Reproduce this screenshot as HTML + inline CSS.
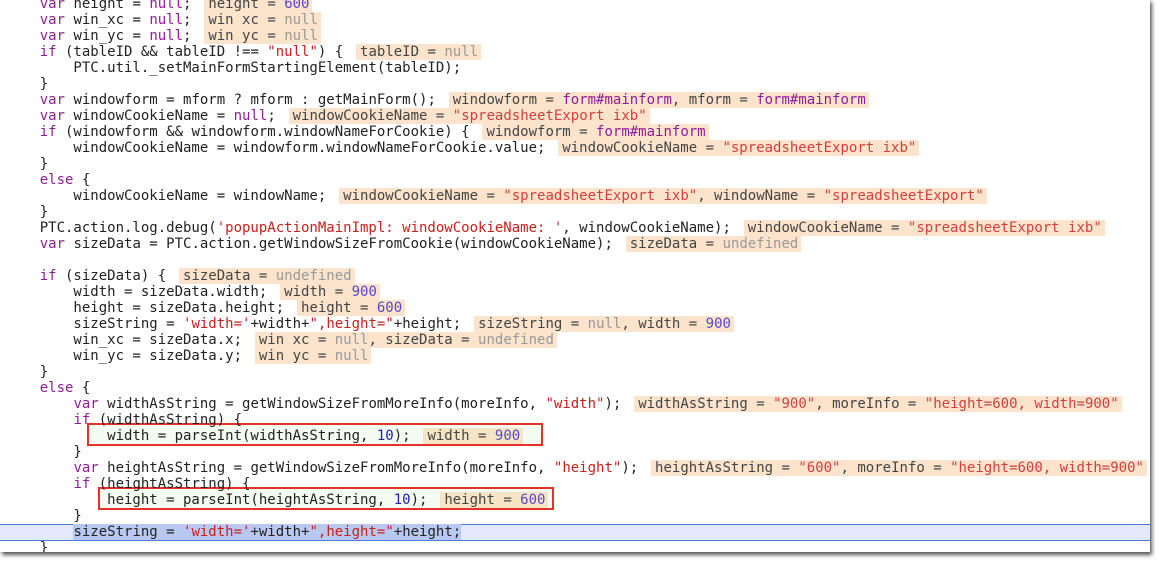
<!DOCTYPE html>
<html><head><meta charset="utf-8"><style>
html,body{margin:0;padding:0;background:#fff;width:1163px;height:565px;overflow:hidden}
#pg{position:absolute;left:0;top:-1px;width:1150px;height:553px;background:#fff;overflow:hidden;
box-shadow:2px 3px 4px rgba(0,0,0,.65),0 0 2px rgba(0,0,0,.15)}
.ln{position:absolute;left:6px;height:16px;line-height:16px;white-space:pre;font-family:"DejaVu Sans Mono","Liberation Mono",monospace;font-size:14px;color:#222}
.k{color:#8e1e95}.s{color:#c8201c}.n{color:#2020b0}
.a{background:#fbe3cc;display:inline-block;height:16px;margin-left:-4px;padding:0 3px 0 4px;color:#444}
.a .g{color:#999}.a .s{color:#d04040}.a .n{color:#5848c8}.a .k{color:#8e1e95}
.box{position:absolute;border:2px solid #e6302a;background:#f4fbf1;box-sizing:border-box}
.sel{position:absolute;left:0;width:1150px;top:523px;height:17px;background:#e2e9fa;border-top:1px solid #4a7ae0;border-bottom:1px solid #4a7ae0;box-sizing:border-box}
.hs{background:#b8c8f0}
</style></head><body><div id="pg">
<div class="sel" style="top:525px"></div>
<div class="box" style="left:87px;top:424px;width:456px;height:23px"></div>
<div class="box" style="left:98px;top:488px;width:456px;height:23px"></div>
<div class="ln" style="top:-3px">    <span class="k">var</span> height = <span class="k">null</span>;  <span class="a">height = <span class="n">600</span></span></div>
<div class="ln" style="top:13px">    <span class="k">var</span> win_xc = <span class="k">null</span>;  <span class="a">win xc = <span class="g">null</span></span></div>
<div class="ln" style="top:29px">    <span class="k">var</span> win_yc = <span class="k">null</span>;  <span class="a">win yc = <span class="g">null</span></span></div>
<div class="ln" style="top:45px">    <span class="k">if</span> (tableID &amp;&amp; tableID !== <span class="s">"null"</span>) {  <span class="a">tableID = <span class="g">null</span></span></div>
<div class="ln" style="top:61px">        PTC.util._setMainFormStartingElement(tableID);</div>
<div class="ln" style="top:77px">    }</div>
<div class="ln" style="top:93px">    <span class="k">var</span> windowform = mform ? mform : getMainForm();  <span class="a">windowform = <span class="k">form#mainform</span>, mform = <span class="k">form#mainform</span></span></div>
<div class="ln" style="top:109px">    <span class="k">var</span> windowCookieName = <span class="k">null</span>;  <span class="a">windowCookieName = <span class="s">"spreadsheetExport ixb"</span></span></div>
<div class="ln" style="top:125px">    <span class="k">if</span> (windowform &amp;&amp; windowform.windowNameForCookie) {  <span class="a">windowform = <span class="k">form#mainform</span></span></div>
<div class="ln" style="top:141px">        windowCookieName = windowform.windowNameForCookie.value;  <span class="a">windowCookieName = <span class="s">"spreadsheetExport ixb"</span></span></div>
<div class="ln" style="top:157px">    }</div>
<div class="ln" style="top:173px">    <span class="k">else</span> {</div>
<div class="ln" style="top:189px">        windowCookieName = windowName;  <span class="a">windowCookieName = <span class="s">"spreadsheetExport ixb"</span>, windowName = <span class="s">"spreadsheetExport"</span></span></div>
<div class="ln" style="top:205px">    }</div>
<div class="ln" style="top:221px">    PTC.action.log.debug(<span class="s">'popupActionMainImpl: windowCookieName: '</span>, windowCookieName);  <span class="a">windowCookieName = <span class="s">"spreadsheetExport ixb"</span></span></div>
<div class="ln" style="top:237px">    <span class="k">var</span> sizeData = PTC.action.getWindowSizeFromCookie(windowCookieName);  <span class="a">sizeData = <span class="g">undefined</span></span></div>
<div class="ln" style="top:269px">    <span class="k">if</span> (sizeData) {  <span class="a">sizeData = <span class="g">undefined</span></span></div>
<div class="ln" style="top:285px">        width = sizeData.width;  <span class="a">width = <span class="n">900</span></span></div>
<div class="ln" style="top:301px">        height = sizeData.height;  <span class="a">height = <span class="n">600</span></span></div>
<div class="ln" style="top:317px">        sizeString = <span class="s">'width='</span>+width+<span class="s">",height="</span>+height;  <span class="a">sizeString = <span class="g">null</span>, width = <span class="n">900</span></span></div>
<div class="ln" style="top:333px">        win_xc = sizeData.x;  <span class="a">win xc = <span class="g">null</span>, sizeData = <span class="g">undefined</span></span></div>
<div class="ln" style="top:349px">        win_yc = sizeData.y;  <span class="a">win yc = <span class="g">null</span></span></div>
<div class="ln" style="top:365px">    }</div>
<div class="ln" style="top:381px">    <span class="k">else</span> {</div>
<div class="ln" style="top:397px">        <span class="k">var</span> widthAsString = getWindowSizeFromMoreInfo(moreInfo, <span class="s">"width"</span>);  <span class="a">widthAsString = <span class="s">"900"</span>, moreInfo = <span class="s">"height=600, width=900"</span></span></div>
<div class="ln" style="top:413px">        <span class="k">if</span> (widthAsString) {</div>
<div class="ln" style="top:429px">            width = parseInt(widthAsString, <span class="n">10</span>);  <span class="a" style="background:#f5e4c6">width = <span class="n">900</span></span></div>
<div class="ln" style="top:445px">        }</div>
<div class="ln" style="top:461px">        <span class="k">var</span> heightAsString = getWindowSizeFromMoreInfo(moreInfo, <span class="s">"height"</span>);  <span class="a">heightAsString = <span class="s">"600"</span>, moreInfo = <span class="s">"height=600, width=900"</span></span></div>
<div class="ln" style="top:477px">        <span class="k">if</span> (heightAsString) {</div>
<div class="ln" style="top:493px">            height = parseInt(heightAsString, <span class="n">10</span>);  <span class="a" style="background:#f5e4c6">height = <span class="n">600</span></span></div>
<div class="ln" style="top:509px">        }</div>
<div class="ln" style="top:525px">        <span class="hs">sizeString = <span class="s">'width='</span>+width+<span class="s">",height="</span>+height;</span></div>
<div class="ln" style="top:541px">    }</div>
</div></body></html>
